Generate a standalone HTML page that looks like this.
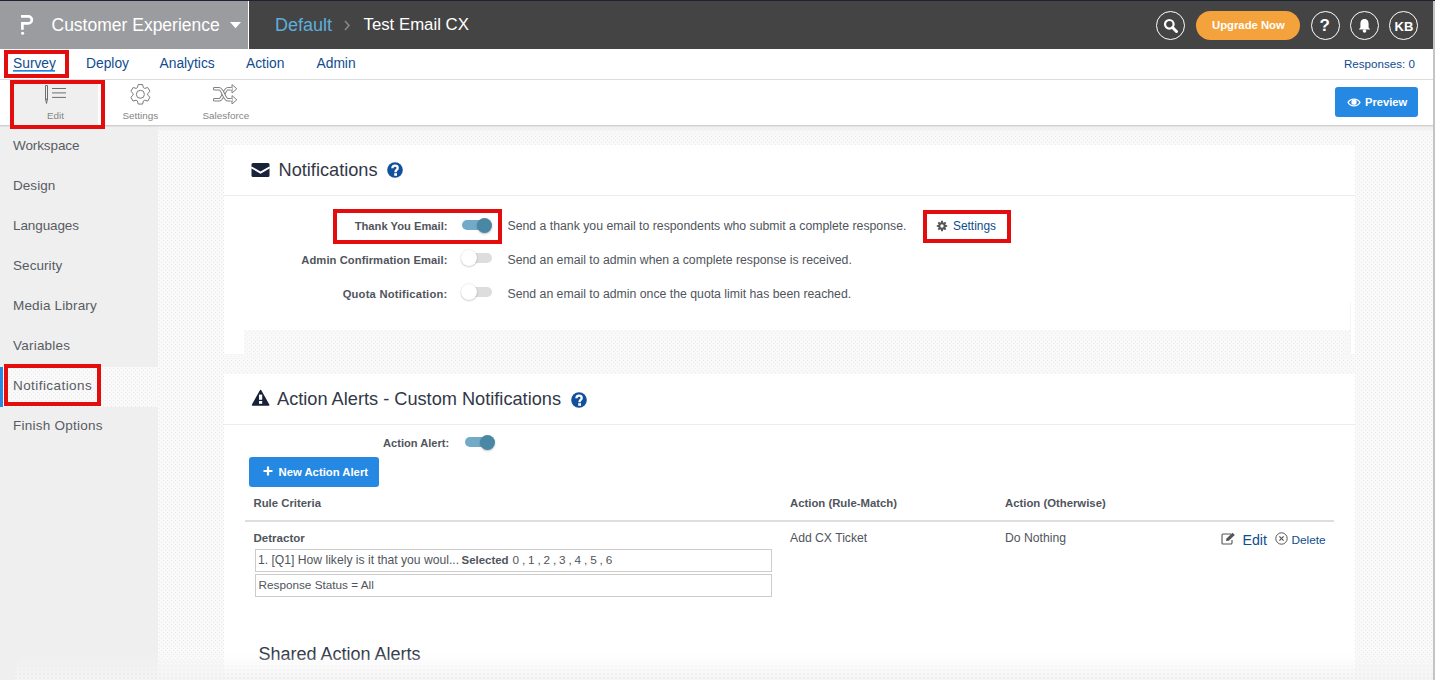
<!DOCTYPE html>
<html><head><meta charset="utf-8"><title>Notifications</title>
<style>
html,body{margin:0;padding:0;}
body{width:1435px;height:680px;overflow:hidden;position:relative;background:#fff;font-family:"Liberation Sans",sans-serif;}
.a{position:absolute;}
.t{position:absolute;white-space:nowrap;line-height:20px;}
</style></head><body>
<div class="a" style="left:0px;top:0px;width:1435px;height:1px;background:#1e2233"></div>
<div class="a" style="left:0px;top:1px;width:248px;height:48px;background:#9b9c9f"></div>
<div class="a" style="left:248px;top:1px;width:1px;height:48px;background:#ffffff"></div>
<div class="a" style="left:249px;top:1px;width:1186px;height:48px;background:#444444"></div>
<div class="a" style="left:1433px;top:1px;width:2px;height:679px;background:#c4c4c8;z-index:50"></div>
<svg class="a" style="left:19px;top:12px" width="18" height="24" viewBox="0 0 18 24">
<path d="M2 4.3 H9.3 A3.55 3.55 0 0 1 9.3 11.4 H3.4 V17.8" fill="none" stroke="#fff" stroke-width="2.7"/>
<circle cx="3.6" cy="21.2" r="1.55" fill="#fff"/></svg>
<div class="t" style="left:51.50px;top:14.94px;font-size:17.5px;color:#ffffff;">Customer Experience</div>
<svg class="a" style="left:229.5px;top:22px" width="11" height="7" viewBox="0 0 11 7"><path d="M0 0H11L5.5 6.2Z" fill="#fff"/></svg>
<div class="t" style="left:275.00px;top:14.76px;font-size:18px;color:#5eaedc;">Default</div>
<svg class="a" style="left:343px;top:19px" width="8" height="13" viewBox="0 0 8 13"><path d="M2 2 L6 6.5 L2 11" fill="none" stroke="#888" stroke-width="1.6"/></svg>
<div class="t" style="left:363.50px;top:15.18px;font-size:16.8px;color:#ffffff;">Test Email CX</div>
<div class="a" style="left:1156px;top:11px;width:29px;height:29px;border:1.5px solid #fff;border-radius:50%;box-sizing:border-box"></div>
<svg class="a" style="left:1162px;top:17px" width="18" height="18" viewBox="0 0 18 18"><circle cx="7.3" cy="7.3" r="4.3" fill="none" stroke="#fff" stroke-width="2.2"/><path d="M10.5 10.5 L14.5 14.5" stroke="#fff" stroke-width="3" stroke-linecap="round"/></svg>
<div class="a" style="left:1196px;top:11px;width:104px;height:29px;background:#f3a23c;border-radius:15px"></div>
<div class="t" style="left:1212.00px;top:14.88px;font-size:11.3px;color:#ffffff;font-weight:bold;">Upgrade Now</div>
<div class="a" style="left:1311px;top:11px;width:29px;height:29px;border:1.5px solid #fff;border-radius:50%;box-sizing:border-box"></div>
<div class="t" style="left:1319.50px;top:16.41px;font-size:17px;color:#ffffff;font-weight:bold;">?</div>
<div class="a" style="left:1350px;top:11px;width:29px;height:29px;border:1.5px solid #fff;border-radius:50%;box-sizing:border-box"></div>
<svg class="a" style="left:1356px;top:17px" width="17" height="17" viewBox="0 0 17 17"><path d="M8.5 2 C5.3 2 4.4 4.6 4.4 7 V10.4 L2.8 12.6 H14.2 L12.6 10.4 V7 C12.6 4.6 11.7 2 8.5 2Z" fill="#fff"/><circle cx="8.5" cy="14" r="1.8" fill="#fff"/></svg>
<div class="a" style="left:1389px;top:11px;width:29px;height:29px;border:1.5px solid #fff;border-radius:50%;box-sizing:border-box"></div>
<div class="t" style="left:1394.50px;top:16.50px;font-size:13px;color:#ffffff;font-weight:bold;">KB</div>
<div class="a" style="left:0px;top:49px;width:1433px;height:30px;background:#fff"></div>
<div class="a" style="left:0px;top:79px;width:1433px;height:1px;background:#dcdcdc"></div>
<div class="t" style="left:13.00px;top:54.22px;font-size:13.8px;color:#0f4c90;">Survey</div>
<div class="a" style="left:13px;top:70px;width:42px;height:2px;background:linear-gradient(#1f86e6 50%,#6aaee9 50%)"></div>
<div class="t" style="left:86.00px;top:54.22px;font-size:13.8px;color:#0f4c90;">Deploy</div>
<div class="t" style="left:159.50px;top:54.22px;font-size:13.8px;color:#0f4c90;">Analytics</div>
<div class="t" style="left:246.00px;top:54.22px;font-size:13.8px;color:#0f4c90;">Action</div>
<div class="t" style="left:316.50px;top:54.22px;font-size:13.8px;color:#0f4c90;">Admin</div>
<div class="t" style="left:1344.00px;top:53.98px;font-size:11.6px;color:#0f4c90;">Responses: 0</div>
<div class="a" style="left:0px;top:80px;width:1433px;height:45px;background:#fff"></div>
<div class="a" style="left:0px;top:125px;width:1433px;height:1px;background:#d0d0d0;z-index:5"></div>
<div class="a" style="left:158px;top:126px;width:1275px;height:1px;background:#e4e4e4;z-index:5"></div>
<div class="a" style="left:158px;top:127px;width:1275px;height:3px;background:#f1f1f1;z-index:5"></div>
<div class="a" style="left:0px;top:126px;width:158px;height:1px;background:#e0e0e0;z-index:5"></div>
<div class="a" style="left:14px;top:84px;width:84px;height:41px;background:#efefef"></div>
<svg class="a" style="left:43px;top:83px" width="26" height="23" viewBox="0 0 26 23">
<path d="M2.5 2.5 H4.5 V16 L3.5 20.5 L2.5 16 Z" fill="none" stroke="#6e6e6e" stroke-width="1"/>
<path d="M2.5 16.3 H4.5" stroke="#6e6e6e" stroke-width="1.2"/>
<path d="M9 5.5 H23 M9 9.9 H23 M9 14.4 H23" stroke="#6e6e6e" stroke-width="1"/></svg>
<div class="t" style="left:47.00px;top:105.57px;font-size:9.9px;color:#858585;">Edit</div>
<svg class="a" style="left:129px;top:83px" width="23" height="23" viewBox="0 0 23 23"><path d="M8.42 4.63 L9.22 1.54 L13.58 1.54 L14.38 4.63 L15.68 5.39 L18.76 4.53 L20.94 8.31 L18.66 10.54 L18.66 12.06 L20.94 14.29 L18.76 18.07 L15.68 17.21 L14.38 17.97 L13.58 21.06 L9.22 21.06 L8.42 17.97 L7.12 17.21 L4.04 18.07 L1.86 14.29 L4.14 12.06 L4.14 10.54 L1.86 8.31 L4.04 4.53 L7.12 5.39Z" fill="none" stroke="#7a7a7a" stroke-width="1" stroke-linejoin="round"/><circle cx="11.4" cy="11.3" r="4" fill="none" stroke="#7a7a7a" stroke-width="1"/></svg>
<div class="t" style="left:122.50px;top:105.57px;font-size:9.9px;color:#858585;">Settings</div>
<svg class="a" style="left:213px;top:83px" width="26" height="23" viewBox="0 0 26 23">
<g fill="none" stroke-linecap="round">
<path d="M1.6 16.8 H6 C10 16.8 11 5.8 15 5.8 H20" stroke="#808080" stroke-width="3.6"/>
<path d="M1.6 16.8 H6 C10 16.8 11 5.8 15 5.8 H20" stroke="#fff" stroke-width="1.6"/>
<path d="M1.6 5.8 H6 C10 5.8 11 16.8 15 16.8 H20" stroke="#808080" stroke-width="3.6"/>
<path d="M1.6 5.8 H6 C10 5.8 11 16.8 15 16.8 H20" stroke="#fff" stroke-width="1.6"/>
</g>
<path d="M19 1.6 L23.8 5.8 L19 10 Z M19 12.6 L23.8 16.8 L19 21 Z" fill="#fff" stroke="#808080" stroke-width="1" stroke-linejoin="round"/>
<path d="M18.2 4.8 V6.8 M18.2 15.8 V17.8" stroke="#fff" stroke-width="1.4"/>
</svg>
<div class="t" style="left:202.50px;top:105.57px;font-size:9.9px;color:#858585;">Salesforce</div>
<div class="a" style="left:1335px;top:87px;width:83px;height:30px;background:#2589e3;border-radius:3px"></div>
<svg class="a" style="left:1347px;top:97px" width="14" height="11" viewBox="0 0 14 11"><path d="M1 5.5 C3.5 1 10.5 1 13 5.5 C10.5 10 3.5 10 1 5.5Z" fill="none" stroke="#fff" stroke-width="1.3"/><circle cx="7" cy="5.2" r="2.6" fill="#fff"/></svg>
<div class="t" style="left:1365.00px;top:91.82px;font-size:11.2px;color:#ffffff;font-weight:bold;">Preview</div>
<div class="a" style="left:0px;top:127px;width:158px;height:553px;background:#efefef"></div>
<div class="a" style="left:158px;top:127px;width:1275px;height:553px;background-color:#f9f9f9;background-image:radial-gradient(circle at 1.5px 1.5px,#ececec 0.45px,transparent 0.95px),radial-gradient(circle at 1.5px 1.5px,#ececec 0.45px,transparent 0.95px);background-size:4px 4px,4px 4px;background-position:0 0,2px 2px;"></div>
<div class="a" style="left:0px;top:367px;width:158px;height:40px;background-color:#f9f9f9;background-image:radial-gradient(circle at 1.5px 1.5px,#ececec 0.45px,transparent 0.95px),radial-gradient(circle at 1.5px 1.5px,#ececec 0.45px,transparent 0.95px);background-size:4px 4px,4px 4px;background-position:0 0,2px 2px;"></div>
<div class="a" style="left:0px;top:367px;width:3px;height:40px;background:#2a88e0"></div>
<div class="t" style="left:13.00px;top:136.32px;font-size:13.5px;color:#585c64;letter-spacing:-0.1px">Workspace</div>
<div class="t" style="left:13.00px;top:176.32px;font-size:13.5px;color:#585c64;letter-spacing:0.05px">Design</div>
<div class="t" style="left:13.00px;top:216.32px;font-size:13.5px;color:#585c64;letter-spacing:-0.1px">Languages</div>
<div class="t" style="left:13.00px;top:256.32px;font-size:13.5px;color:#585c64;letter-spacing:0.07px">Security</div>
<div class="t" style="left:13.00px;top:296.32px;font-size:13.5px;color:#585c64;letter-spacing:0.16px">Media Library</div>
<div class="t" style="left:13.00px;top:336.32px;font-size:13.5px;color:#585c64;letter-spacing:0.22px">Variables</div>
<div class="t" style="left:13.00px;top:376.32px;font-size:13.5px;color:#585c64;letter-spacing:0.43px">Notifications</div>
<div class="t" style="left:13.00px;top:416.32px;font-size:13.5px;color:#585c64;letter-spacing:0.25px">Finish Options</div>
<div class="a" style="left:224px;top:145px;width:1131px;height:209px;background:#fff"></div>
<div class="a" style="left:224px;top:195px;width:1131px;height:1px;background:#ececec"></div>
<svg class="a" style="left:251px;top:163px" width="19" height="14" viewBox="0 0 19 14">
<rect x="0.5" y="0" width="18" height="14" rx="1.5" fill="#19223a"/>
<path d="M0.3 4.3 L9.5 9.6 L18.7 4.3" fill="none" stroke="#fff" stroke-width="1.8"/></svg>
<div class="t" style="left:278.50px;top:159.69px;font-size:18.2px;color:#323848;">Notifications</div>
<svg class="a" style="left:387.3px;top:161.5px" width="16" height="16" viewBox="0 0 16 16"><circle cx="8" cy="8" r="7.8" fill="#11509b"/><path d="M5.4 6.3 C5.4 4.4 6.5 3.6 8 3.6 C9.6 3.6 10.7 4.5 10.7 5.9 C10.7 7.8 8.6 7.8 8.6 9.6 V10.2" fill="none" stroke="#fff" stroke-width="2.3"/><rect x="7.2" y="11.2" width="2.8" height="2.6" fill="#fff"/></svg>
<div class="t" style="right:987.50px;top:216.12px;font-size:11.2px;color:#50555d;font-weight:bold;letter-spacing:0px">Thank You Email:</div>
<div class="a" style="left:462px;top:220px;width:27px;height:10px;background:#72aac8;border-radius:5px"></div>
<div class="a" style="left:477px;top:217.5px;width:15px;height:15px;background:#4a87a4;border-radius:50%;box-shadow:0 1px 2px rgba(0,0,0,.25)"></div>
<div class="t" style="left:507.50px;top:215.75px;font-size:12.27px;color:#50555d;">Send a thank you email to respondents who submit a complete response.</div>
<svg class="a" style="left:936px;top:220px" width="12" height="12" viewBox="0 0 12 12"><path d="M9.65 4.93 L11.23 5.13 L11.23 6.87 L9.65 7.07 L9.33 7.82 L10.31 9.08 L9.08 10.31 L7.82 9.33 L7.07 9.65 L6.87 11.23 L5.13 11.23 L4.93 9.65 L4.18 9.33 L2.92 10.31 L1.69 9.08 L2.67 7.82 L2.35 7.07 L0.77 6.87 L0.77 5.13 L2.35 4.93 L2.67 4.18 L1.69 2.92 L2.92 1.69 L4.18 2.67 L4.93 2.35 L5.13 0.77 L6.87 0.77 L7.07 2.35 L7.82 2.67 L9.08 1.69 L10.31 2.92 L9.33 4.18Z" fill="#555"/><circle cx="6" cy="6" r="1.7" fill="#fff"/></svg>
<div class="t" style="left:953.00px;top:215.88px;font-size:11.9px;color:#0f4c90;">Settings</div>
<div class="t" style="right:987.50px;top:250.12px;font-size:11.2px;color:#50555d;font-weight:bold;letter-spacing:0.08px">Admin Confirmation Email:</div>
<div class="a" style="left:463px;top:253px;width:29px;height:10px;background:#dddddd;border-radius:5px"></div>
<div class="a" style="left:461px;top:250px;width:16px;height:16px;background:#fff;border-radius:50%;box-shadow:0 0.5px 2px rgba(0,0,0,.3)"></div>
<div class="t" style="left:507.50px;top:249.75px;font-size:12.27px;color:#50555d;">Send an email to admin when a complete response is received.</div>
<div class="t" style="right:987.50px;top:284.12px;font-size:11.2px;color:#50555d;font-weight:bold;letter-spacing:0.22px">Quota Notification:</div>
<div class="a" style="left:463px;top:287px;width:29px;height:10px;background:#dddddd;border-radius:5px"></div>
<div class="a" style="left:461px;top:284px;width:16px;height:16px;background:#fff;border-radius:50%;box-shadow:0 0.5px 2px rgba(0,0,0,.3)"></div>
<div class="t" style="left:507.50px;top:283.75px;font-size:12.27px;color:#50555d;">Send an email to admin once the quota limit has been reached.</div>
<div class="a" style="left:244px;top:330px;width:1107px;height:24px;background-color:#f9f9f9;background-image:radial-gradient(circle at 1.5px 1.5px,#ececec 0.45px,transparent 0.95px),radial-gradient(circle at 1.5px 1.5px,#ececec 0.45px,transparent 0.95px);background-size:4px 4px,4px 4px;background-position:0 0,2px 2px;"></div>
<div class="a" style="left:1350px;top:302px;width:1px;height:52px;background:#f6f6f6"></div>
<div class="a" style="left:224px;top:374px;width:1131px;height:306px;background:#fff"></div>
<div class="a" style="left:224px;top:424px;width:1131px;height:1px;background:#ececec"></div>
<svg class="a" style="left:251px;top:389px" width="19" height="18" viewBox="0 0 19 18">
<path d="M9.6 1.6 L17.6 16 H1.6 Z" fill="#19223a" stroke="#19223a" stroke-width="1.6" stroke-linejoin="round"/>
<rect x="8" y="5.6" width="3.2" height="5.2" fill="#fff"/><rect x="8" y="12" width="3.2" height="2.8" fill="#fff"/></svg>
<div class="t" style="left:277.00px;top:389.19px;font-size:18.2px;color:#323848;">Action Alerts - Custom Notifications</div>
<svg class="a" style="left:571.2px;top:391.5px" width="16" height="16" viewBox="0 0 16 16"><circle cx="8" cy="8" r="7.8" fill="#11509b"/><path d="M5.4 6.3 C5.4 4.4 6.5 3.6 8 3.6 C9.6 3.6 10.7 4.5 10.7 5.9 C10.7 7.8 8.6 7.8 8.6 9.6 V10.2" fill="none" stroke="#fff" stroke-width="2.3"/><rect x="7.2" y="11.2" width="2.8" height="2.6" fill="#fff"/></svg>
<div class="t" style="left:383.00px;top:433.15px;font-size:11.1px;color:#50555d;font-weight:bold;">Action Alert:</div>
<div class="a" style="left:465px;top:437px;width:27px;height:10px;background:#72aac8;border-radius:5px"></div>
<div class="a" style="left:480px;top:434.5px;width:15px;height:15px;background:#4a87a4;border-radius:50%;box-shadow:0 1px 2px rgba(0,0,0,.25)"></div>
<div class="a" style="left:249px;top:457px;width:130px;height:30px;background:#2589e3;border-radius:3px"></div>
<svg class="a" style="left:263px;top:466px" width="10" height="10" viewBox="0 0 10 10"><path d="M5 0.5V9.5M0.5 5H9.5" stroke="#fff" stroke-width="2.2"/></svg>
<div class="t" style="left:278.50px;top:462.08px;font-size:11.3px;color:#fff;font-weight:bold;">New Action Alert</div>
<div class="t" style="left:253.50px;top:493.07px;font-size:11.35px;color:#50555d;font-weight:bold;">Rule Criteria</div>
<div class="t" style="left:790.00px;top:493.07px;font-size:11.33px;color:#50555d;font-weight:bold;">Action (Rule-Match)</div>
<div class="t" style="left:1005.00px;top:493.07px;font-size:11.33px;color:#50555d;font-weight:bold;">Action (Otherwise)</div>
<div class="a" style="left:245px;top:520px;width:1089px;height:2px;background:#dedede"></div>
<div class="t" style="left:253.50px;top:528.00px;font-size:11.54px;color:#50555d;font-weight:bold;">Detractor</div>
<div class="a" style="left:255px;top:549px;width:517px;height:23px;border:1px solid #cccccc;box-sizing:border-box"></div>
<div class="a" style="left:255px;top:574px;width:517px;height:23px;border:1px solid #cccccc;box-sizing:border-box"></div>
<div class="t" style="left:258.00px;top:549.79px;font-size:12.15px;color:#50555d;">1. [Q1] How likely is it that you woul...</div>
<div class="t" style="left:461.50px;top:550.03px;font-size:11.46px;color:#50555d;font-weight:bold;">Selected</div>
<div class="t" style="left:512.50px;top:549.93px;font-size:11.76px;color:#50555d;letter-spacing:-0.2px">0 , 1 , 2 , 3 , 4 , 5 , 6</div>
<div class="t" style="left:258.50px;top:574.93px;font-size:11.76px;color:#50555d;">Response Status = All</div>
<div class="t" style="left:790.00px;top:527.78px;font-size:12.19px;color:#50555d;">Add CX Ticket</div>
<div class="t" style="left:1005.00px;top:527.78px;font-size:12.19px;color:#50555d;">Do Nothing</div>
<svg class="a" style="left:1221px;top:532px" width="15" height="13" viewBox="0 0 15 13"><path d="M10 2 H2 Q1 2 1 3 V11 Q1 12 2 12 H10 Q11 12 11 11 V8" fill="none" stroke="#555" stroke-width="1.1"/><path d="M5 9 L5.5 6.5 L11.5 0.8 L13.8 3 L7.8 8.7 Z" fill="#555"/></svg>
<div class="t" style="left:1242.50px;top:529.58px;font-size:14.2px;color:#0f4c90;">Edit</div>
<svg class="a" style="left:1275px;top:532px" width="13" height="13" viewBox="0 0 13 13"><circle cx="6.5" cy="6.5" r="5.7" fill="none" stroke="#555" stroke-width="1"/><path d="M4.4 4.4 L8.6 8.6 M8.6 4.4 L4.4 8.6" stroke="#555" stroke-width="1.2"/></svg>
<div class="t" style="left:1291.50px;top:530.40px;font-size:11.83px;color:#0f4c90;">Delete</div>
<div class="t" style="left:258.50px;top:643.76px;font-size:18px;color:#323848;">Shared Action Alerts</div>
<div class="a" style="left:4px;top:50px;width:65px;height:28px;border:4px solid #e30d0d;box-sizing:border-box;z-index:60"></div>
<div class="a" style="left:10px;top:80px;width:95px;height:49px;border:4px solid #e30d0d;box-sizing:border-box;z-index:60"></div>
<div class="a" style="left:333px;top:209px;width:169px;height:35px;border:4px solid #e30d0d;box-sizing:border-box;z-index:60"></div>
<div class="a" style="left:923px;top:210px;width:88px;height:33px;border:4px solid #e30d0d;box-sizing:border-box;z-index:60"></div>
<div class="a" style="left:4px;top:364px;width:97px;height:42px;border:4px solid #e30d0d;box-sizing:border-box;z-index:60"></div>
<div class="a" style="left:15px;top:653px;width:1418px;height:27px;background:linear-gradient(rgba(247,247,247,0),rgba(245,245,245,0.92));border-top-left-radius:22px 18px;z-index:40"></div>
<div class="a" style="left:15px;top:653px;width:1418px;height:27px;background-image:radial-gradient(circle at 1px 1px,#e2e2e2 0.6px,transparent 1px);background-size:4px 4px;-webkit-mask-image:linear-gradient(transparent 20%,rgba(0,0,0,.6));border-top-left-radius:22px 18px;z-index:41"></div>
</body></html>
